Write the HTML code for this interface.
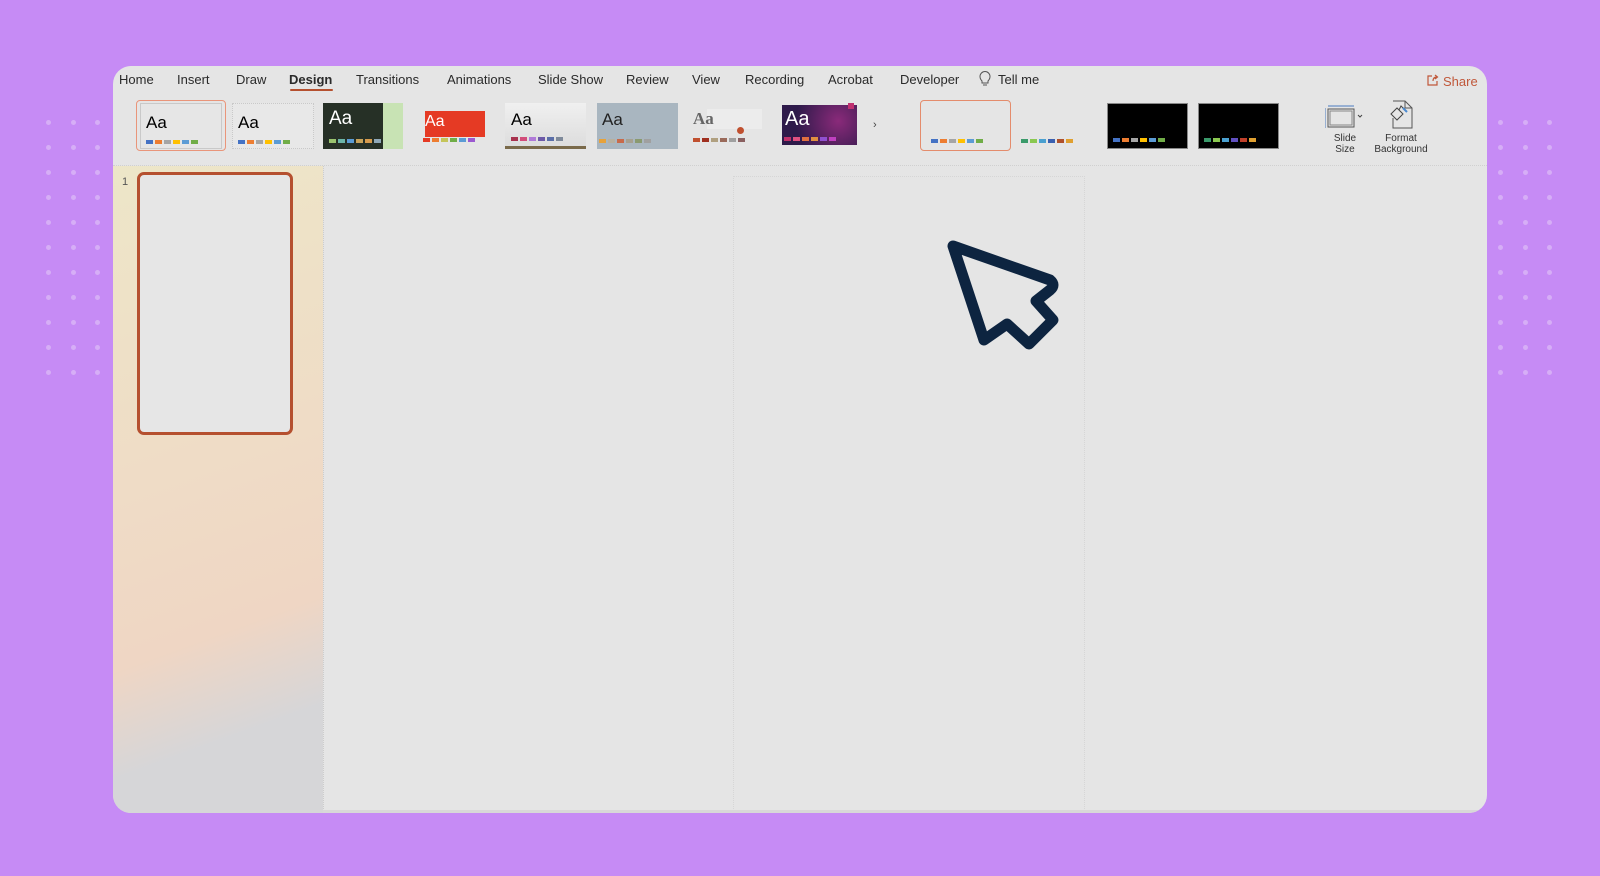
<!DOCTYPE html>
<html><head><meta charset="utf-8"><style>
*{margin:0;padding:0;box-sizing:border-box}
body{width:1600px;height:876px;background:#c68bf5;position:relative;overflow:hidden;font-family:"Liberation Sans",sans-serif;}
.dot{position:absolute;width:5px;height:5px;border-radius:50%;background:#d6aef6}
.win{position:absolute;left:113px;top:66px;width:1374px;height:747px;background:#e5e5e5;border-radius:18px;overflow:hidden}
.tab{position:absolute;top:5px;font-size:13px;color:#2a2a2a;white-space:nowrap}
.th{position:absolute;height:46px;border:1px solid #c9c9c9}
.sw{position:absolute;display:flex;gap:2px}
.sw i{display:block;width:7px;height:4px}
.aa{position:absolute;font-size:17px}
</style></head><body>
<div id="dots"></div>
<script>
var d=document.getElementById('dots'),h='';
[48,73,97,1500,1525,1549].forEach(function(x){for(var r=0;r<11;r++){h+='<div class="dot" style="left:'+(x-2.5)+'px;top:'+(122+r*25-2.5)+'px"></div>';}});
d.innerHTML=h;
</script>
<div class="win">
  <div class="tab" style="left:6px;top:6px">Home</div>
  <div class="tab" style="left:64px;top:6px">Insert</div>
  <div class="tab" style="left:123px;top:6px">Draw</div>
  <div class="tab" style="left:176px;top:6px;font-weight:bold">Design</div>
  <div style="position:absolute;left:177px;top:23px;width:43px;height:2px;background:#b5502f;border-radius:1px"></div>
  <div class="tab" style="left:243px;top:6px">Transitions</div>
  <div class="tab" style="left:334px;top:6px">Animations</div>
  <div class="tab" style="left:425px;top:6px">Slide Show</div>
  <div class="tab" style="left:513px;top:6px">Review</div>
  <div class="tab" style="left:579px;top:6px">View</div>
  <div class="tab" style="left:632px;top:6px">Recording</div>
  <div class="tab" style="left:715px;top:6px">Acrobat</div>
  <div class="tab" style="left:787px;top:6px">Developer</div>
  <svg style="position:absolute;left:866px;top:5px" width="12" height="16" viewBox="0 0 12 16"><path d="M3 10C1 8 1 6 1 5.5A5 5 0 0 1 11 5.5C11 6 11 8 9 10V12H3Z M4 14H8" fill="none" stroke="#555" stroke-width="1"/></svg>
  <div class="tab" style="left:885px;top:6px">Tell me</div>
  <svg style="position:absolute;left:1314px;top:8px" width="12" height="12" viewBox="0 0 12 12"><path d="M5 2H1V11H10V7 M6 7C6 4 8 3 10 3 M8 1L10.5 3 8 5" fill="none" stroke="#c0583a" stroke-width="1.2"/></svg>
  <div class="tab" style="left:1330px;top:8px;color:#c0583a">Share</div>

  <div style="position:absolute;left:23px;top:34px;width:90px;height:51px;border:1.5px solid #e9957a;border-radius:4px"></div>
  <div class="th" style="left:27px;top:37px;width:82px;background:#e6e6e6"><span class="aa" style="left:5px;top:9px">Aa</span><div class="sw" style="left:5px;top:36px"><i style="background:#4472c4"></i><i style="background:#ed7d31"></i><i style="background:#a5a5a5"></i><i style="background:#ffc000"></i><i style="background:#5b9bd5"></i><i style="background:#70ad47"></i></div></div>
  <div class="th" style="left:119px;top:37px;width:82px;background:#e8e8e8;border-style:dotted"><span class="aa" style="left:5px;top:9px">Aa</span><div class="sw" style="left:5px;top:36px"><i style="background:#4472c4"></i><i style="background:#ed7d31"></i><i style="background:#a5a5a5"></i><i style="background:#ffc000"></i><i style="background:#5b9bd5"></i><i style="background:#70ad47"></i></div></div>
  <div class="th" style="left:210px;top:37px;width:80px;background:linear-gradient(90deg,#263026 75%,#c8e3b4 75%);border:none"><span class="aa" style="left:6px;top:5px;color:#fff;font-size:19px">Aa</span><div class="sw" style="left:6px;top:36px"><i style="background:#9ac36f"></i><i style="background:#6cb5a8"></i><i style="background:#5b9bd5"></i><i style="background:#c9a35a"></i><i style="background:#d79b4d"></i><i style="background:#8fa8b8"></i></div></div>
  <div style="position:absolute;left:312px;top:45px;width:60px;height:26px;background:#e53a24"><span class="aa" style="left:0;top:2px;color:#fff;font-size:16px">Aa</span></div>
  <div class="sw" style="left:310px;top:72px"><i style="background:#e53a24"></i><i style="background:#ed7d31"></i><i style="background:#c5c55a"></i><i style="background:#70ad47"></i><i style="background:#5b9bd5"></i><i style="background:#9b59d0"></i></div>
  <div class="th" style="left:392px;top:37px;width:81px;background:linear-gradient(#f0f0f0,#ddd);border:none;border-bottom:3px solid #7a6a4a"><span class="aa" style="left:6px;top:7px">Aa</span><div class="sw" style="left:6px;top:34px"><i style="background:#a8324e"></i><i style="background:#d24d7a"></i><i style="background:#b07ad8"></i><i style="background:#6d5aa8"></i><i style="background:#5b6fa8"></i><i style="background:#7f8a9a"></i></div></div>
  <div class="th" style="left:484px;top:37px;width:81px;background:#a9b6c0;border:none"><span class="aa" style="left:5px;top:7px;color:#222">Aa</span><div class="sw" style="left:2px;top:36px"><i style="background:#e7a23a"></i><i style="background:#b7b0a0"></i><i style="background:#c86a4a"></i><i style="background:#a6a090"></i><i style="background:#8a9a70"></i><i style="background:#a0a0a0"></i></div></div>
  <div style="position:absolute;left:580px;top:43px;width:69px;height:20px;background:linear-gradient(90deg,transparent 20%,#ececec 20%)"><span class="aa" style="left:0;top:0;color:#666;font-family:'Liberation Serif',serif;font-weight:bold">Aa</span></div>
  <div style="position:absolute;left:624px;top:61px;width:7px;height:7px;border-radius:50%;background:#c0502f"></div>
  <div class="sw" style="left:580px;top:72px"><i style="background:#c0502f"></i><i style="background:#a03020"></i><i style="background:#b0a080"></i><i style="background:#9a6a5a"></i><i style="background:#a0a0a0"></i><i style="background:#8a6060"></i></div>
  <div class="th" style="left:669px;top:39px;width:75px;height:40px;background:radial-gradient(circle at 75% 40%,#8a2a7a,#2e1a4a 70%);border:none"><span class="aa" style="left:3px;top:3px;color:#fff;font-size:20px">Aa</span><div style="position:absolute;right:3px;top:-2px;width:6px;height:6px;background:#c03070"></div><div class="sw" style="left:2px;top:32px"><i style="background:#c0306a"></i><i style="background:#e05080"></i><i style="background:#e07040"></i><i style="background:#e09040"></i><i style="background:#9050d0"></i><i style="background:#c040c0"></i></div></div>
  <div style="position:absolute;left:760px;top:53px;font-size:11px;color:#444">›</div>
  <div style="position:absolute;left:807px;top:34px;width:91px;height:51px;border:1px solid #e48c6c;border-radius:4px"></div>
  <div class="sw" style="left:818px;top:73px"><i style="background:#4472c4"></i><i style="background:#ed7d31"></i><i style="background:#a5a5a5"></i><i style="background:#ffc000"></i><i style="background:#5b9bd5"></i><i style="background:#70ad47"></i></div>
  <div class="sw" style="left:908px;top:73px"><i style="background:#3a9a6a"></i><i style="background:#8ac850"></i><i style="background:#4aa0d0"></i><i style="background:#3a60b0"></i><i style="background:#b0502a"></i><i style="background:#e0a030"></i></div>
  <div class="th" style="left:994px;top:37px;width:81px;background:#000;border-color:#888"><div class="sw" style="left:5px;top:34px"><i style="background:#4472c4"></i><i style="background:#ed7d31"></i><i style="background:#a5a5a5"></i><i style="background:#ffc000"></i><i style="background:#5b9bd5"></i><i style="background:#70ad47"></i></div></div>
  <div class="th" style="left:1085px;top:37px;width:81px;background:#000;border-color:#888"><div class="sw" style="left:5px;top:34px"><i style="background:#3a9a6a"></i><i style="background:#8ac850"></i><i style="background:#4aa0d0"></i><i style="background:#6050c0"></i><i style="background:#c0402a"></i><i style="background:#e0a030"></i></div></div>
  <svg style="position:absolute;left:1212px;top:38px" width="40" height="26" viewBox="0 0 40 26"><rect x="3" y="5" width="26" height="18" fill="none" stroke="#555"/><rect x="5" y="7" width="22" height="14" fill="none" stroke="#888"/><path d="M3 2H29 M0 4V24" stroke="#4a7ac0"/><path d="M33 11L35 13 37 11" fill="none" stroke="#444"/></svg>
  <div style="position:absolute;left:1219px;top:67px;width:26px;font-size:10px;line-height:11px;text-align:center;color:#333">Slide Size</div>
  <svg style="position:absolute;left:1275px;top:34px" width="26" height="30" viewBox="0 0 26 30"><path d="M5 1H17L24 8V28H5V18 M17 1V8H24" fill="none" stroke="#555"/><path d="M3 14L9 8 15 14 9 20Z M11 10L13 6 16 9" fill="#e5e5e5" stroke="#444"/><path d="M15 8L19 12" stroke="#4a8ad0" stroke-width="2"/></svg>
  <div style="position:absolute;left:1228px;top:67px;width:120px;font-size:10px;line-height:11px;text-align:center;color:#333">Format<br>Background</div>
  <div style="position:absolute;left:0;top:99px;width:1374px;border-top:1px dotted #d0d0d0"></div>

  <div style="position:absolute;left:0;top:100px;width:210px;height:647px;background:linear-gradient(160deg,#ede6c8 0%,#efdcc6 45%,#efd6c4 70%,#d6d6d8 85%)"></div>
  <div style="position:absolute;left:9px;top:110px;font-size:11px;color:#555">1</div>
  <div style="position:absolute;left:24px;top:106px;width:156px;height:263px;border:3px solid #b5502f;border-radius:7px;background:#e6e6e6"></div>
  <div style="position:absolute;left:210px;top:100px;width:1px;height:647px;border-left:1px dotted #ccc"></div>
  <div style="position:absolute;left:620px;top:110px;width:352px;height:675px;border:1px dotted #d6d6d6;border-bottom:none"></div>
  <div style="position:absolute;left:210px;top:744px;width:1164px;height:3px;background:#d8d8d8"></div>
</div>
<svg style="position:absolute;left:0;top:0" width="1600" height="876"><path d="M953 246 L1050 280 Q1056 285 1050 290 L1036 301 L1053 320 L1029 344 L1007 324 L984 340 Z" fill="none" stroke="#0d2440" stroke-width="11" stroke-linejoin="round"/></svg>
</body></html>
